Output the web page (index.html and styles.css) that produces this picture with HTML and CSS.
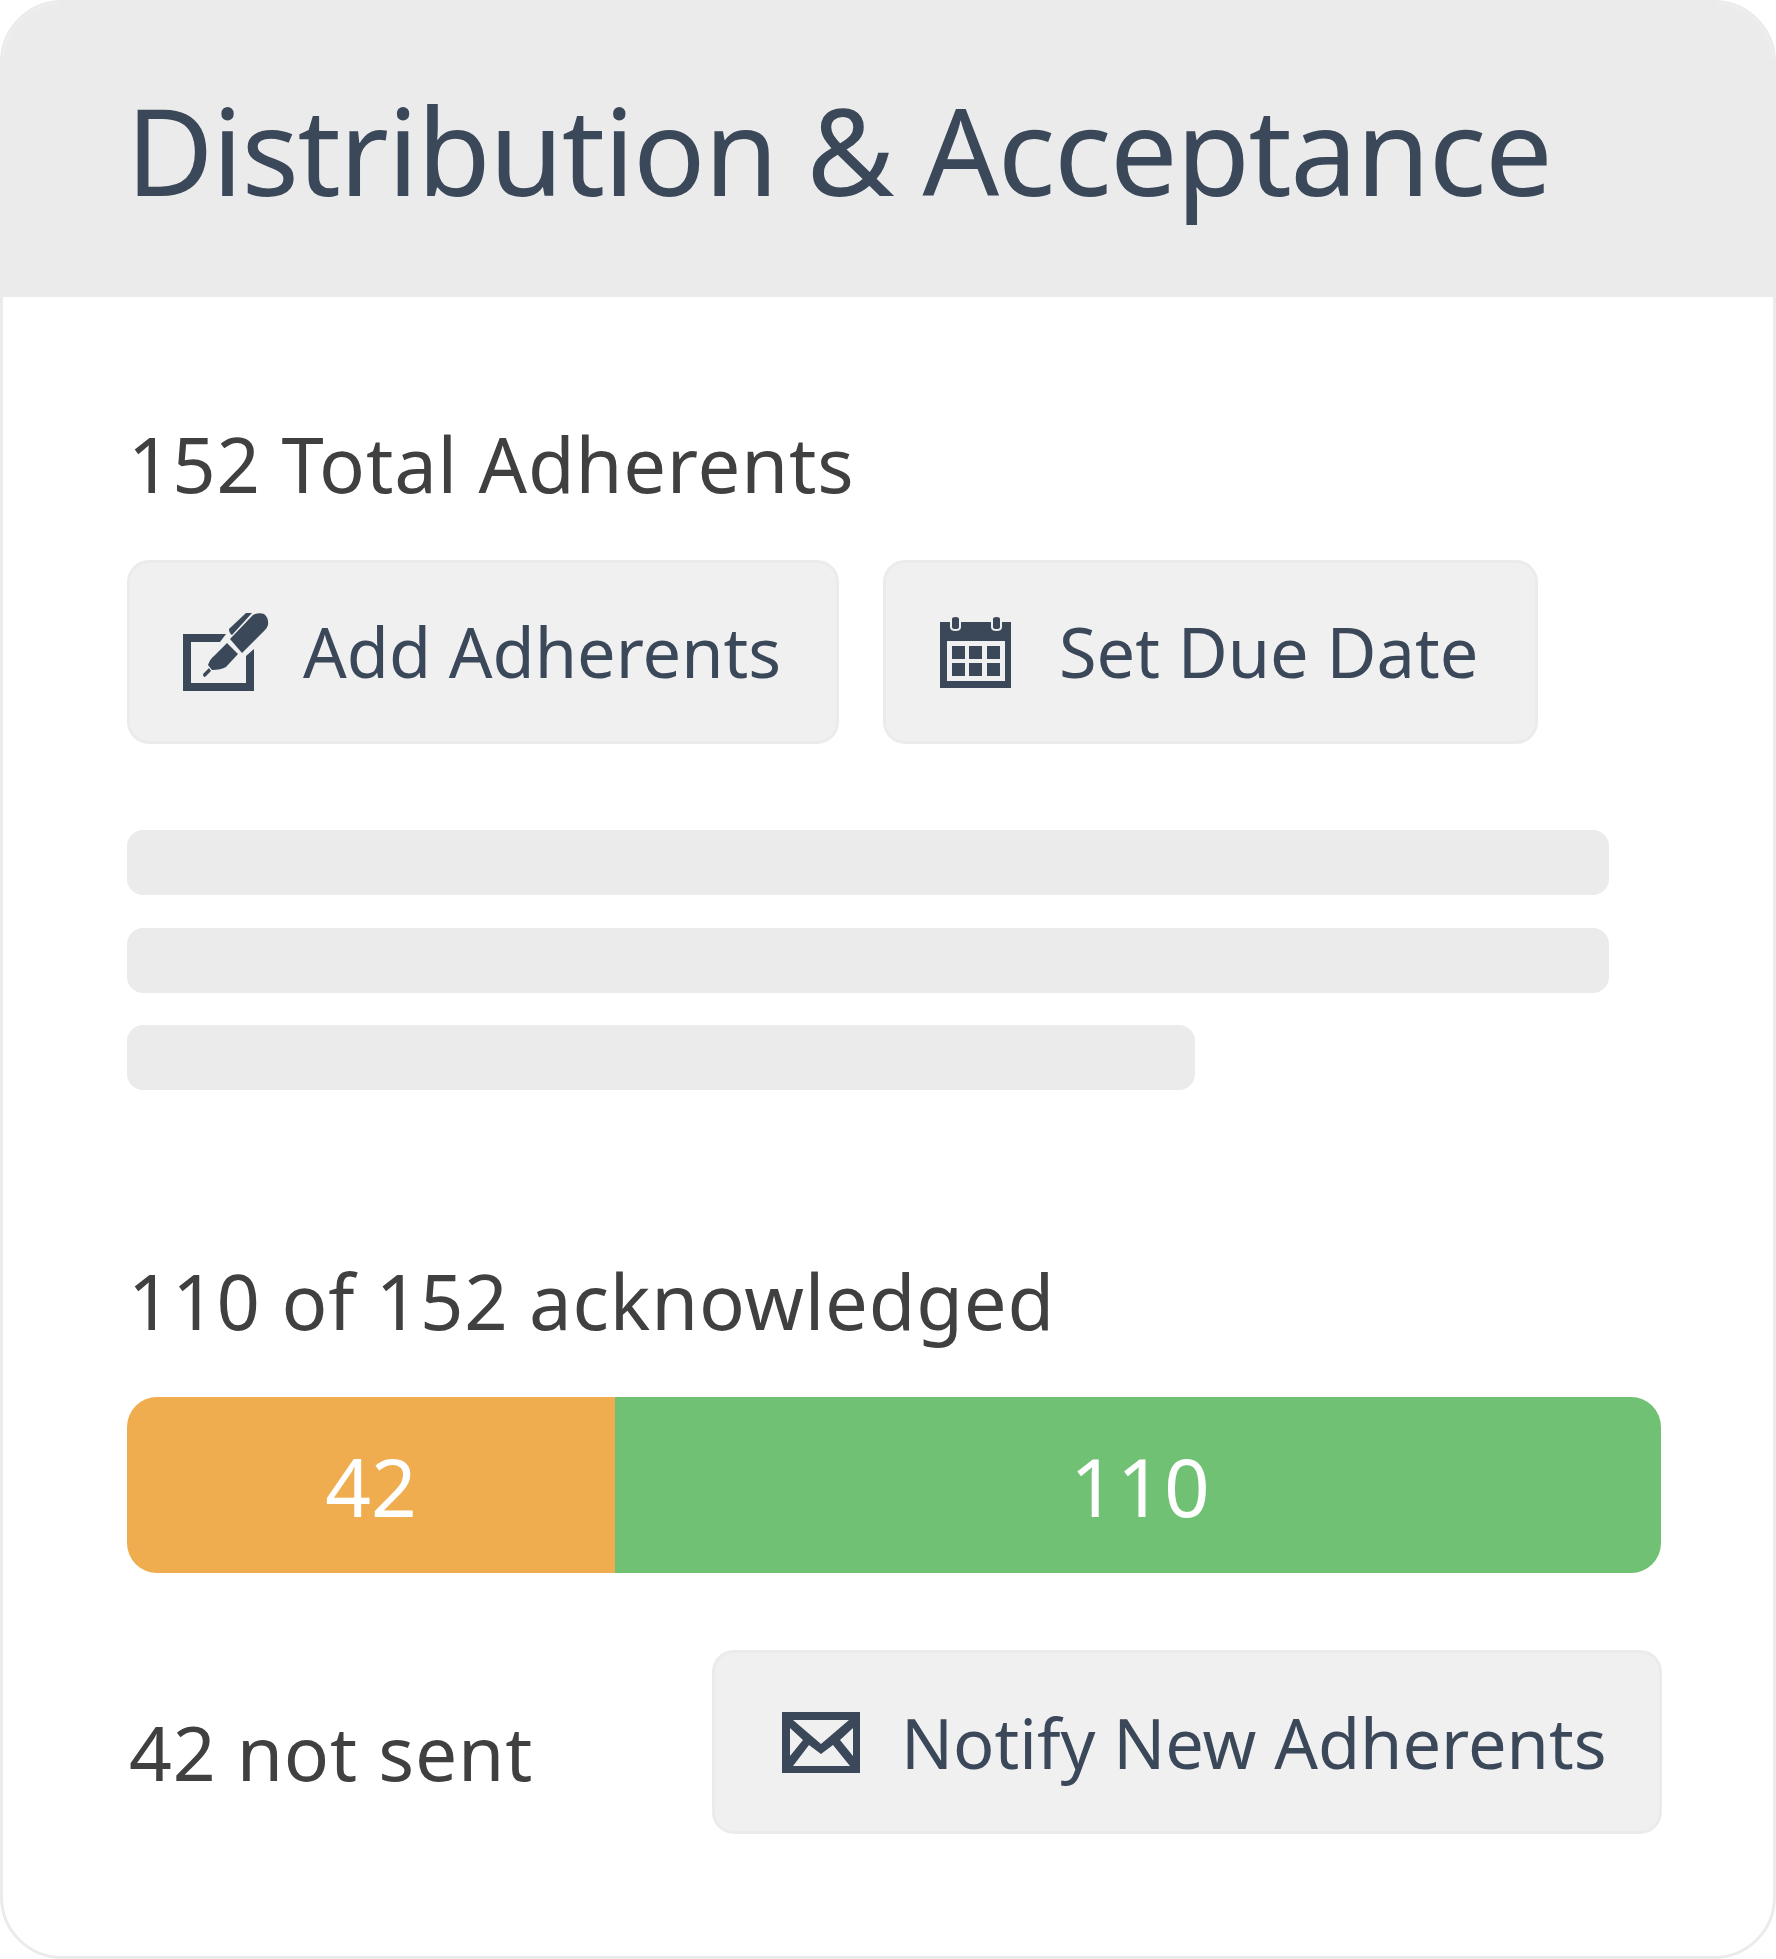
FILE: index.html
```html
<!DOCTYPE html>
<html lang="en">
<head>
<meta charset="utf-8">
<title>Distribution &amp; Acceptance</title>
<link rel="stylesheet" href="styles.css">
</head>
<body>
<section class="card">
  <header class="card-head"><h1 class="title">Distribution &amp; Acceptance</h1></header>
  <div class="card-body">
    <p class="label">152 Total Adherents</p>
    <div class="actions">
      <button class="btn btn-add">
        <svg class="icon icon-edit" viewBox="0 0 86 78"><path class="ink" d="M0 21H43L37 29H8V70H63V43L71 36V78H0Z"/><path class="ink" d="M46 16L63 0H69L49 22Q46 20 46 16ZM47 26L70 2Q76-1 81 1Q86 5 85 12Q84 15 82 17L59 40ZM44 30L55 41L43 54Q38 57 29 57L25 52Q27 46 31 43ZM26 55L28 58L22 64Q20 64 20 61Z"/></svg>
        <span class="btn-text">Add Adherents</span>
      </button>
      <button class="btn btn-date">
        <svg class="icon icon-cal" viewBox="0 0 71 71"><path class="ink" fill-rule="evenodd" d="M0 5H10V10Q10 14 15.500 14Q21 14 21 10V5H51V10Q51 14 56.500 14Q62 14 62 10V5H71V71H0ZM7 24V64H65V24ZM12 29H25V42H12ZM29 29H42V42H29ZM47 29H60V42H47ZM12 46H25V59H12ZM29 46H42V59H29ZM47 46H60V59H47Z"/><path class="ink" d="M12 2Q12 0 15.500 0Q19 0 19 2V10Q19 12 15.500 12Q12 12 12 10ZM53 2Q53 0 56.500 0Q60 0 60 2V10Q60 12 56.500 12Q53 12 53 10Z"/></svg>
        <span class="btn-text">Set Due Date</span>
      </button>
    </div>
    <div class="skeleton">
      <div class="sk-line"></div>
      <div class="sk-line"></div>
      <div class="sk-line sk-short"></div>
    </div>
    <p class="label label-ack">110 of 152 acknowledged</p>
    <div class="bar">
      <div class="seg seg-orange">42</div>
      <div class="seg seg-green">110</div>
    </div>
    <div class="foot">
      <span class="foot-text">42 not sent</span>
      <button class="btn btn-notify">
        <svg class="icon icon-mail" viewBox="0 0 78 61"><path class="ink" fill-rule="evenodd" d="M0 0H78V61H0ZM8 16V44L21 28ZM11 8L39 32L67 8ZM71 16L58 28L71 44ZM27 33L11 54H68L51 33L39 42Z"/></svg>
        <span>Notify New Adherents</span>
      </button>
    </div>
  </div>
</section>
</body>
</html>
```
FILE: styles.css
```css
* { box-sizing: border-box; }
html, body { margin: 0; padding: 0; background: #fff; }
body { font-family: "Noto Sans", "Open Sans", sans-serif; }
.card {
  width: 1776px; height: 1959px; background: #fff;
  border: 3px solid #ebebeb; border-radius: 62px; overflow: hidden;
}
.card-head { height: 294px; background: #ebebeb; padding: 0 0 0 123px; display: flex; align-items: center; }
.title { margin: 0 0 2px; font-size: 120px; font-weight: 400; letter-spacing: -1.500px; color: #3a4859; white-space: nowrap; }
.card-body { padding: 0 110px 0 124px; }
.label { margin: 0; padding-left: 1px; font-size: 76px; line-height: 90px; letter-spacing: 0.800px; color: #404040; }
.card-body > .label:first-child { margin-top: 122px; }
.actions { display: flex; gap: 44px; margin-top: 51px; }
.btn {
  display: flex; align-items: center; height: 184px; background: #f0f0f0;
  border: 3px solid #ebebeb; border-radius: 22px; font: inherit; font-size: 68.500px; color: #3a4859; padding: 0;
}
.btn-text { padding-bottom: 2px; }
.btn-add { width: 712px; padding-left: 53px; gap: 34px; }
.btn-date { width: 655px; padding-left: 54px; gap: 48px; }
.btn-notify { width: 950px; padding-left: 67px; gap: 41px; }
.icon { flex: none; display: block; }
.ink { fill: #3a4859; }
.icon-edit { width: 86px; height: 78px; }
.icon-cal { width: 71px; height: 71px; }
.icon-mail { width: 78px; height: 61px; }
.skeleton { display: flex; flex-direction: column; gap: 32.500px; margin-top: 86px; }
.sk-line { width: 1482px; height: 65px; background: #ebebeb; border-radius: 16px; }
.sk-short { width: 1068px; }
.label-ack { margin-top: 166px; }
.bar { display: flex; height: 176px; width: 1534px; margin-top: 51px; border-radius: 30px; overflow: hidden; }
.seg { display: flex; align-items: center; justify-content: center; color: #fff; font-size: 80px; }
.seg-orange { width: 488px; background: #efad4f; }
.seg-green { flex: 1; background: #71c174; padding-left: 5px; letter-spacing: 1px; }
.foot { display: flex; justify-content: space-between; width: 1535px; margin-top: 77px; }
.foot-text { font-size: 75px; padding: 57px 0 0 2px; color: #404040; line-height: 90px; letter-spacing: 0.800px; }
```
